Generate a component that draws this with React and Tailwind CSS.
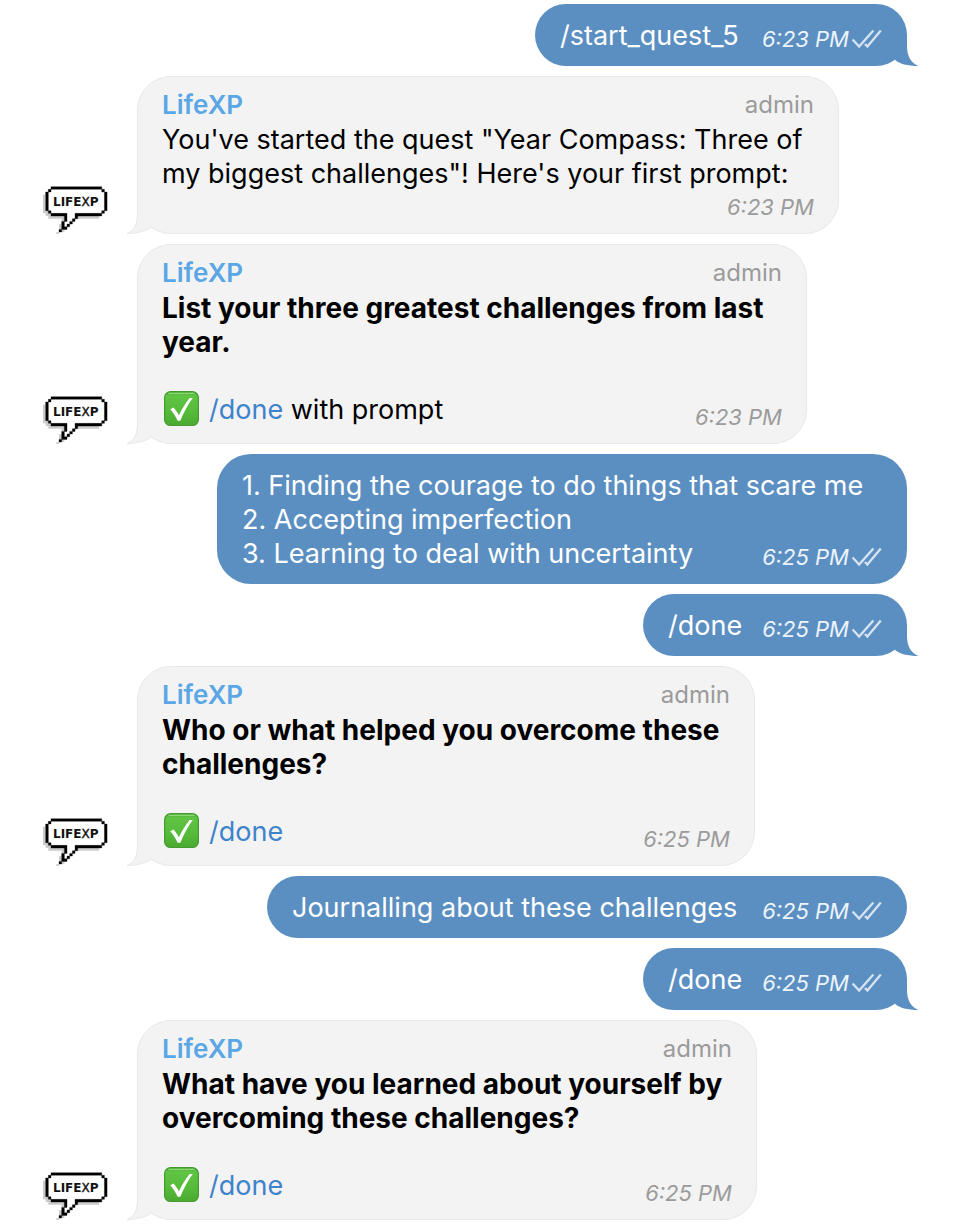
import React from "react";

const messages = [
  { from: "me", width: "w-[372px]", lines: ["/start_quest_5"], time: "6:23 PM", tail: true },
  {
    from: "bot",
    width: "w-[702px]",
    lines: ['You\'ve started the quest "Year Compass: Three of', "my biggest challenges\"! Here's your first prompt:"],
    time: "6:23 PM",
  },
  {
    from: "bot",
    width: "w-[670px]",
    bold: true,
    lines: ["List your three greatest challenges from last", "year."],
    action: " with prompt",
    time: "6:23 PM",
  },
  {
    from: "me",
    width: "w-[690px]",
    lines: [
      "1. Finding the courage to do things that scare me",
      "2. Accepting imperfection",
      "3. Learning to deal with uncertainty",
    ],
    time: "6:25 PM",
  },
  { from: "me", width: "w-[264px]", lines: ["/done"], time: "6:25 PM", tail: true },
  {
    from: "bot",
    width: "w-[618px]",
    bold: true,
    lines: ["Who or what helped you overcome these", "challenges?"],
    action: "",
    time: "6:25 PM",
  },
  { from: "me", width: "w-[640px]", lines: ["Journalling about these challenges"], time: "6:25 PM" },
  { from: "me", width: "w-[264px]", lines: ["/done"], time: "6:25 PM", tail: true },
  {
    from: "bot",
    width: "w-[620px]",
    bold: true,
    lines: ["What have you learned about yourself by", "overcoming these challenges?"],
    action: "",
    time: "6:25 PM",
  },
];

// Speech bubble on a grid of 23 x 17 cells.
const outline =
  "M2 0h19v1h-19z M1 1h1v1h-1z M21 1h1v1h-1z M0 2h1v7h-1z M22 2h1v7h-1z M1 9h1v1h-1z M21 9h1v1h-1z M2 10h6v1h-6z M11 10h10v1h-10z M7 11h1v2h-1z M11 11h1v1h-1z M10 12h1v1h-1z M6 13h1v2h-1z M9 13h1v1h-1z M8 14h1v1h-1z M6 15h2v1h-2z M5 16h1v1h-1z";
const body = "M2 0h19v1h1v1h1v7h-1v1h-1v1h-9v1h-1v1h-1v1h-1v1h-1v1h-2v1h-1v-1h1v-3h1v-2h-5v-1h-1v-1h-1v-7h1v-1h1z";

function Avatar() {
  return (
    <svg viewBox="0 0 66 48" className="h-12 w-[66px] shrink-0" role="img" aria-label="LifeXP">
      <g transform="translate(2.67 0.67) scale(2.67)">
        <path d={body} fill="#cbcbcb" transform="translate(-1 1)" />
        <path d={body} fill="#fff" />
        <path d={outline} fill="#000" stroke="#000" strokeWidth="0.12" />
      </g>
      <text x="10" y="20" fontFamily="DejaVu Sans, sans-serif" fontSize="12" fontWeight="700" fill="#111">
        LIFE
        <tspan fontWeight="400" stroke="#111" strokeWidth="0.4">X</tspan>
        <tspan>P</tspan>
      </text>
    </svg>
  );
}

function CheckEmoji() {
  return (
    <svg viewBox="-1 1 37 36" className="mr-[10px] h-9 w-[37px] shrink-0 overflow-visible" role="img" aria-label="Done">
      <defs>
        <linearGradient id="tick-green" x1="0" y1="0" x2="0" y2="1">
          <stop offset="0" stopColor="#4fae35" />
          <stop offset="0.12" stopColor="#60c444" />
          <stop offset="0.6" stopColor="#55bb39" />
          <stop offset="1" stopColor="#4aa931" />
        </linearGradient>
      </defs>
      <rect x="1.6" y="0.7" width="33.8" height="33.8" rx="6" fill="url(#tick-green)" stroke="#459a30" strokeWidth="1.2" />
      <path d="M6 2.4h25" stroke="#8fd67a" strokeWidth="1.2" strokeLinecap="round" />
      <path d="M7.2 18.2l3.3-1.6c2.2 2.3 3.9 4.9 5.4 7.6 3-6.5 6.6-12 10.7-17.3h3.1c-5.3 7.3-9.2 14.9-12.4 22.8h-2.7c-2.1-4.4-4.3-8.1-7.4-11.5z" fill="#fff" />
    </svg>
  );
}

function DoubleTick() {
  return (
    <svg viewBox="0 0 32 22" className="h-[22px] w-8" fill="none" stroke="#d6e4f2" strokeWidth="2.3" aria-label="Read">
      <path d="M1.6 11.5l6.5 7L22.4 2.5M14 16l2.4 2.6L29.8 2.5" />
    </svg>
  );
}

function Outgoing({ message }) {
  const leading = message.lines.slice(0, -1);
  const last = message.lines[message.lines.length - 1];
  return (
    <li className="flex justify-end pr-[53px]">
      <div
        className={`${message.width} relative max-w-full rounded-[34px] bg-[#5b8fc2] pt-[15px] pr-6 pb-[13px] pl-[25px] text-[27px] leading-[34px] text-white`}
      >
        {leading.map((line) => (
          <p key={line}>{line}</p>
        ))}
        <div className="flex items-end justify-between">
          <p>{last}</p>
          <div className="flex shrink-0 items-center gap-[2px]">
            <time className="text-[22px] leading-7 italic text-[#edf4fb]">{message.time}</time>
            <DoubleTick />
          </div>
        </div>
        {message.tail && (
          <svg viewBox="0 0 32 32" className="absolute -right-3 bottom-0 h-8 w-8" aria-hidden="true">
            <path d="M20 0V12C20 22 24 29 31.5 32C21 32 12 30 7 25L8 0Z" fill="#5b8fc2" />
          </svg>
        )}
      </div>
    </li>
  );
}

function Incoming({ message }) {
  const hasAction = message.action !== undefined;
  return (
    <li className="flex items-end pl-[43px]">
      <Avatar />
      <article
        className={`${message.width} relative ml-7 max-w-full rounded-[34px] border border-[#e8e8e8] bg-[#f3f3f3] px-6 pt-[10px] pb-3 text-black`}
      >
        <header className="flex items-center justify-between leading-9">
          <h2 className="text-[26px] font-semibold text-[#5ba7e6]">LifeXP</h2>
          <span className="text-[24px] text-[#9b9b9b]">admin</span>
        </header>
        <p className={`leading-[34px] ${message.bold ? "text-[28px] font-bold" : "text-[27px]"}`}>
          {message.lines.map((line) => (
            <span key={line} className="block whitespace-nowrap">
              {line}
            </span>
          ))}
        </p>
        <footer className={`flex items-end ${hasAction ? "mt-[33px] justify-between" : "mt-[2px] justify-end"}`}>
          {hasAction && (
            <p className="flex items-center pb-[3px] text-[27px] leading-[34px] whitespace-pre">
              <CheckEmoji />
              <a href="#done" className="text-[#3f83cb]">
                /done
              </a>
              {message.action}
            </p>
          )}
          <time className="text-[22px] leading-7 italic text-[#9b9b9b]">{message.time}</time>
        </footer>
        <svg viewBox="0 0 32 32" className="absolute -bottom-px -left-3 h-8 w-8" aria-hidden="true">
          <path d="M11 0V13C11 22 8 29 1 31.5C11 31.5 20 29 25 25L24 0Z" fill="#f3f3f3" />
          <path d="M11.5 0V13C11.5 22 8 29 1 31.5C11 31.5 20 29 25 25" fill="none" stroke="#e8e8e8" />
        </svg>
      </article>
    </li>
  );
}

export default function App() {
  return (
    <main className="min-h-screen overflow-hidden bg-white pt-1 pb-2 font-['Inter','Liberation_Sans',sans-serif]">
      <ol className="flex flex-col gap-[10px]">
        {messages.map((message, index) =>
          message.from === "me" ? (
            <Outgoing key={index} message={message} />
          ) : (
            <Incoming key={index} message={message} />
          )
        )}
      </ol>
    </main>
  );
}
